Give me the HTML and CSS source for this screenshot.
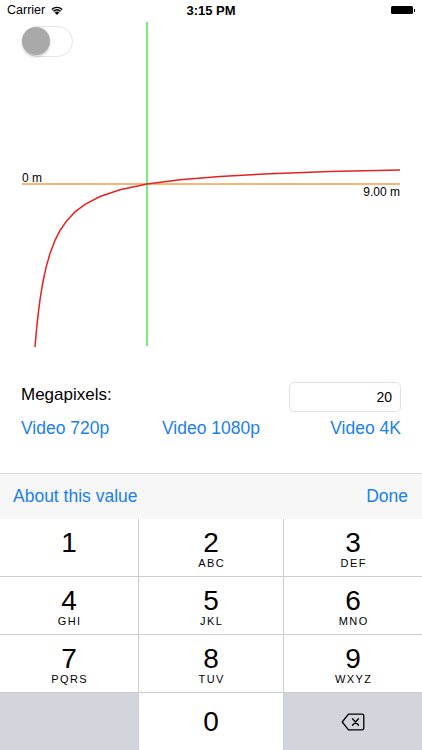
FILE: index.html
```html
<!DOCTYPE html>
<html lang="en">
<head>
  <meta charset="UTF-8">
  <title>Megapixels - Depth of Field</title>
  <link rel="stylesheet" href="styles.css">
</head>
<body>

  <div class="status-bar">
    <div class="carrier">
      Carrier
      <svg class="wifi" width="12" height="9" viewBox="0 0 12 9">
        <path d="M6 9 L0.3 2.9 A8.3 8.3 0 0 1 11.7 2.9 Z" fill="#000"/>
        <path d="M1.6 4.5 A5.9 5.9 0 0 1 10.4 4.5" stroke="#fff" stroke-width="1.1" fill="none"/>
        <path d="M3.3 6.4 A3.4 3.4 0 0 1 8.7 6.4" stroke="#fff" stroke-width="1.1" fill="none"/>
      </svg>
    </div>
    <div class="time">3:15 PM</div>
    <div class="battery">
      <span class="battery-body"></span>
      <span class="battery-nub"></span>
    </div>
  </div>

  <div class="chart">
    <!-- On/off switch sits on top of the graph -->
    <div class="switch"><span class="knob"></span></div>
    <svg width="422" height="330" viewBox="0 0 422 330">
      <line x1="147" y1="2" x2="147" y2="326" stroke="#52e052" stroke-width="1.5"/>
      <line x1="22" y1="164" x2="400" y2="164" stroke="#f4a048" stroke-width="1.5"/>
      <polyline fill="none" stroke="#e8201e" stroke-width="1.5"
        points="35,327 36,315 37,304.6 38,295.4 40,279.8 42,267 43,261.5 46,247.6 50,233.4 55,220.3 60,210.5 67,200.4 75,191.9 85,184.3 100,176.5 120,169.8 147,164.1 180,159.7 220,156.4 270,153.7 330,151.6 400,150"/>
      <text x="22" y="161.5" class="axis-label">0 m</text>
      <text x="400" y="176" class="axis-label" text-anchor="end">9.00 m</text>
    </svg>
  </div>

  <div class="settings">
    <div class="mp-row">
      <label for="mp">Megapixels:</label>
      <input id="mp" type="text" value="20">
    </div>
    <div class="presets">
      <a href="#">Video 720p</a>
      <a href="#" class="center">Video 1080p</a>
      <a href="#" class="right">Video 4K</a>
    </div>
  </div>

  <div class="keyboard">
    <div class="toolbar">
      <a href="#">About this value</a>
      <a href="#">Done</a>
    </div>
    <div class="keypad">
      <div class="key"><span class="digit">1</span><span class="letters">&nbsp;</span></div>
      <div class="key"><span class="digit">2</span><span class="letters">ABC</span></div>
      <div class="key"><span class="digit">3</span><span class="letters">DEF</span></div>
      <div class="key"><span class="digit">4</span><span class="letters">GHI</span></div>
      <div class="key"><span class="digit">5</span><span class="letters">JKL</span></div>
      <div class="key"><span class="digit">6</span><span class="letters">MNO</span></div>
      <div class="key"><span class="digit">7</span><span class="letters">PQRS</span></div>
      <div class="key"><span class="digit">8</span><span class="letters">TUV</span></div>
      <div class="key"><span class="digit">9</span><span class="letters">WXYZ</span></div>
      <div class="key dark"></div>
      <div class="key zero"><span class="digit">0</span></div>
      <div class="key dark delete">
        <svg width="24" height="18" viewBox="0 0 24 18">
          <path d="M7.5 1.2 H21 A1.8 1.8 0 0 1 22.8 3 V15 A1.8 1.8 0 0 1 21 16.8 H7.5 L1.2 9 Z" fill="none" stroke="#000" stroke-width="1.3" stroke-linejoin="round"/>
          <path d="M11.5 5.8 L17.5 12.2 M17.5 5.8 L11.5 12.2" stroke="#000" stroke-width="1.3" stroke-linecap="round"/>
        </svg>
      </div>
    </div>
  </div>

</body>
</html>
```

FILE: styles.css
```css
body {
  margin: 0;
  width: 422px;
  height: 750px;
  overflow: hidden;
  background: #fff;
  font-family: 'Liberation Sans', Arial, sans-serif;
  color: #000;
  display: flex;
  flex-direction: column;
}

a {
  color: #1a80ea;
  text-decoration: none;
}

/* status bar */
.status-bar {
  height: 20px;
  display: grid;
  grid-template-columns: 1fr auto 1fr;
  align-items: center;
  font-size: 12.5px;
}

.carrier {
  padding-left: 7px;
  display: flex;
  align-items: center;
  gap: 6px;
}

.time {
  font-weight: bold;
  font-size: 13px;
}

.battery {
  display: flex;
  align-items: center;
  justify-content: flex-end;
  padding-right: 7px;
}

.battery-body {
  width: 22px;
  height: 8px;
  background: #000;
  border-radius: 1.5px;
}

.battery-nub {
  width: 1.5px;
  height: 3px;
  background: #000;
  margin-left: 1px;
}

/* graph */
.chart {
  position: relative;
  height: 330px;
}

.chart svg {
  display: block;
}

.axis-label {
  font-family: 'Liberation Sans', Arial, sans-serif;
  font-size: 12px;
  fill: #000;
}

.switch {
  position: absolute;
  left: 22px;
  top: 6px;
  width: 51px;
  height: 31px;
  box-sizing: border-box;
  border: 1.5px solid #e4e4e4;
  border-radius: 16px;
  background: #fff;
}

.knob {
  position: absolute;
  left: -1px;
  top: 0;
  width: 28px;
  height: 28px;
  border-radius: 50%;
  background: #a9a9a9;
  box-shadow: 0 2px 3px rgba(0, 0, 0, 0.18);
}

/* megapixels form */
.settings {
  margin-top: 32px;
  padding: 0 21px;
}

.mp-row {
  display: flex;
  justify-content: space-between;
  align-items: flex-start;
  height: 30px;
}

.mp-row label {
  font-size: 17px;
  line-height: 20px;
  margin-top: 3px;
}

.mp-row input {
  width: 112px;
  height: 30px;
  box-sizing: border-box;
  border: 1px solid #e2e2e2;
  border-radius: 5px;
  text-align: right;
  padding: 0 8px 0 0;
  font-family: 'Liberation Sans', Arial, sans-serif;
  font-size: 14px;
  color: #000;
  outline: none;
}

.presets {
  margin-top: 6px;
  display: grid;
  grid-template-columns: 1fr 1fr 1fr;
  font-size: 17.5px;
  line-height: 20px;
}

.presets .center {
  text-align: center;
}

.presets .right {
  text-align: right;
}

/* keyboard */
.keyboard {
  margin-top: auto;
}

.toolbar {
  height: 45px;
  border-top: 1px solid #d9d9d9;
  background: #f7f7f7;
  display: flex;
  justify-content: space-between;
  align-items: center;
  padding: 0 14px 0 13px;
  font-size: 17.5px;
}

.keypad {
  display: grid;
  grid-template-columns: 138px 144px 138px;
  grid-auto-rows: 57px;
  gap: 1px;
  background: #cdcdcd;
}

.key {
  background: #fff;
  display: flex;
  flex-direction: column;
  align-items: center;
  padding-top: 10px;
  box-sizing: border-box;
}

.key .digit {
  font-size: 28px;
  line-height: 28px;
}

.key .letters {
  font-size: 11px;
  line-height: 12px;
  letter-spacing: 1.4px;
  padding-left: 1.4px;
}

.key.dark {
  background: #d2d5db;
}

.key.zero,
.key.delete {
  padding-top: 0;
  justify-content: center;
}

.key.delete svg {
  display: block;
}
```
